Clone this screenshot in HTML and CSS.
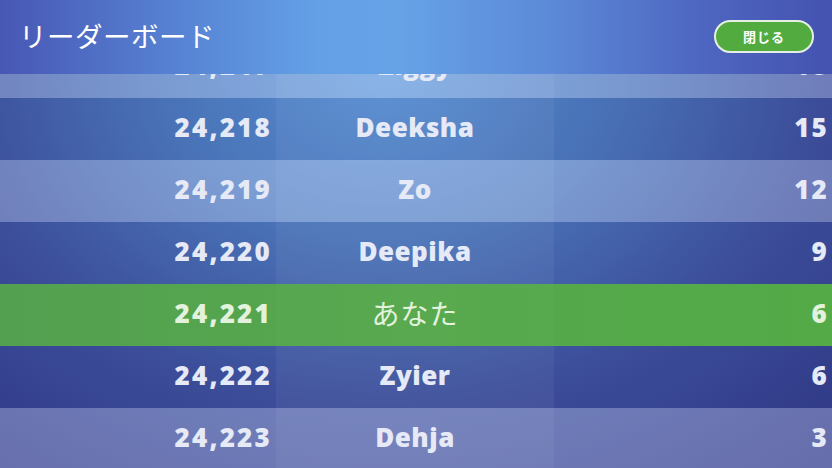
FILE: index.html
```html
<!DOCTYPE html>
<html lang="ja">
<head>
<meta charset="utf-8">
<title>リーダーボード</title>
<link rel="stylesheet" href="styles.css">
</head>
<body>
<div class="screen">
  <header class="topbar">
    <h1 class="title">リーダーボード</h1>
    <button class="close">閉じる</button>
  </header>
  <div class="board">
    <div class="row light"><div class="rank">24,217</div><div class="name">Ziggy</div><div class="score">18</div></div>
    <div class="row dark"><div class="rank">24,218</div><div class="name">Deeksha</div><div class="score">15</div></div>
    <div class="row light"><div class="rank">24,219</div><div class="name">Zo</div><div class="score">12</div></div>
    <div class="row dark"><div class="rank">24,220</div><div class="name">Deepika</div><div class="score">9</div></div>
    <div class="row me"><div class="rank">24,221</div><div class="name jp">あなた</div><div class="score">6</div></div>
    <div class="row dark"><div class="rank">24,222</div><div class="name">Zyier</div><div class="score">6</div></div>
    <div class="row light"><div class="rank">24,223</div><div class="name">Dehja</div><div class="score">3</div></div>
  </div>
</div>
</body>
</html>
```

FILE: styles.css
```css
html, body {
  margin: 0;
  padding: 0;
}
body {
  width: 832px;
  height: 468px;
  overflow: hidden;
  font-family: "Open Sans", "Noto Sans CJK JP", sans-serif;
}
.screen {
  position: relative;
  width: 832px;
  height: 468px;
  overflow: hidden;
  background: radial-gradient(ellipse 80% 110% at 46% 15%, #5c98dc 0%, #4d78bc 35%, #3f529e 65%, #323a88 100%);
}
.topbar {
  position: absolute;
  top: 0;
  left: 0;
  right: 0;
  height: 74px;
  z-index: 2;
  display: flex;
  align-items: center;
  justify-content: space-between;
  padding: 0 18px 0 20px;
  box-sizing: border-box;
  background: linear-gradient(90deg, #4857b4 0%, #5784d4 22%, #64a0e6 38%, #66a2e6 48%, #5c8ad8 66%, #4f68c2 83%, #4452b0 100%);
}
.title {
  margin: 0;
  margin-top: -5px;
  margin-left: -1px;
  font-family: "Noto Sans CJK JP", sans-serif;
  font-weight: 400;
  font-size: 27.5px;
  color: #ffffff;
  letter-spacing: 0.5px;
}
.close {
  width: 100px;
  height: 33px;
  margin-top: -1px;
  border: 2px solid #e6f0e2;
  border-radius: 17px;
  background: #52ab3f;
  color: #ffffff;
  font-family: "Noto Sans CJK JP", sans-serif;
  font-weight: 700;
  font-size: 13px;
  padding: 0;
  letter-spacing: 1px;
}
.board {
  margin-top: 36px;
  display: flex;
  flex-direction: column;
}
.row {
  height: 62px;
  display: grid;
  grid-template-columns: 276px 278px 278px;
  align-items: center;
  color: #e6e9f6;
  font-weight: 800;
  font-size: 26px;
}
.row.light {
  background: rgba(225, 232, 255, 0.3);
}
.row.dark {
  background: rgba(20, 30, 100, 0.08);
}
.row.me {
  background: linear-gradient(90deg, #54a051 0%, #55a84c 50%, #54aa47 100%);
  color: #e2f2dc;
}
.rank, .score, .name {
  height: 62px;
  line-height: 59px;
}
.rank {
  text-align: right;
  padding-right: 4px;
  letter-spacing: 2.2px;
}
.name {
  text-align: center;
  background: rgba(255, 255, 255, 0.05);
  letter-spacing: 0.5px;
}
.row.me .name {
  background: rgba(255, 255, 255, 0.02);
}
.name.jp {
  font-family: "Noto Sans CJK JP", sans-serif;
  font-weight: 400;
  font-size: 28px;
  letter-spacing: 1px;
}
.score {
  text-align: right;
  padding-right: 3px;
  letter-spacing: 2.2px;
}
```
